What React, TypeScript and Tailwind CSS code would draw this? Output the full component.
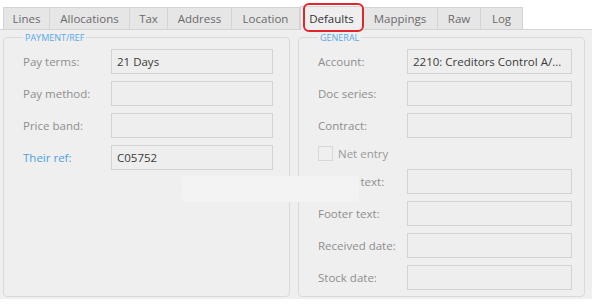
import React from 'react'

const tabs = [
  { name: 'Lines', w: 'w-[47px]' },
  { name: 'Allocations', w: 'w-[80px]' },
  { name: 'Tax', w: 'w-[38px]' },
  { name: 'Address', w: 'w-[64px]' },
  { name: 'Location', w: 'w-[68px]' },
  { name: 'Defaults', w: 'w-[63px]', active: true },
  { name: 'Mappings', w: 'w-[75px]' },
  { name: 'Raw', w: 'w-[43px]' },
  { name: 'Log', w: 'w-[42px]' },
]

const Field = ({ label, value, blue, wide }: { label: string; value?: string; blue?: boolean; wide?: boolean }) => (
  <div className="flex items-center h-[25px]">
    <span className={`${wide ? 'w-[89px]' : 'w-[88px]'} ${blue ? 'text-[#4d9fe3]' : 'text-[#8e8e8e]'}`}>{label}</span>
    <div className={`${wide ? 'w-[165px]' : 'w-[162px]'} h-[25px] border border-[#d3d3d3] bg-[#eeeeee] px-[5px] flex items-center text-[#3a3a3a] whitespace-nowrap overflow-hidden`}>
      {value}
    </div>
  </div>
)

export default function App() {
  return (
    <div className="relative w-[592px] h-[306px] bg-white pt-[5px] text-[11.5px] font-['Open_Sans',sans-serif]">
      {/* tab strip */}
      <div className="flex items-end h-[24px] pl-[3px]">
        {tabs.map((t) =>
          t.active ? (
            <div key={t.name} className={`${t.w} h-[24px] bg-[#efefef] border-x border-t border-[#d4d4d4] flex items-center justify-center text-[#333] relative z-10 -mb-px`}>
              {t.name}
            </div>
          ) : (
            <div key={t.name} className={`${t.w} h-[22px] bg-[#e6e6e6] border-t border-r border-[#d4d4d4] first:border-l flex items-center justify-center text-[#6a6a6a]`}>
              {t.name}
            </div>
          )
        )}
      </div>

      {/* panel */}
      <div className="h-[270px] bg-[#efefef] border-t border-[#d4d4d4] flex gap-[8px] px-[3px] pt-[1px]">
        <fieldset className="w-[287px] h-[266px] border border-[#dadada] rounded-[4px] pl-[19px] pt-[5px]">
          <legend className="px-[2px] text-[9px] leading-[13px] text-[#58a8ea] uppercase">Payment/Ref</legend>
          <div className="flex flex-col gap-[7px]">
            <Field label="Pay terms:" value="21 Days" />
            <Field label="Pay method:" />
            <Field label="Price band:" />
            <Field label="Their ref:" value="C05752" blue />
          </div>
        </fieldset>

        <fieldset className="w-[287px] h-[266px] border border-[#dadada] rounded-[4px] pl-[19px] pt-[5px]">
          <legend className="px-[2px] text-[9px] leading-[13px] text-[#58a8ea] uppercase">General</legend>
          <div className="flex flex-col gap-[7px]">
            <Field label="Account:" value="2210: Creditors Control A/..." wide />
            <Field label="Doc series:" wide />
            <Field label="Contract:" wide />
            <label className="flex items-center h-[17px] gap-[5px] text-[#9a9a9a]">
              <span className="w-[15px] h-[15px] border border-[#d8d8d8] bg-[#efefef]" />
              Net entry
            </label>
            <Field label="Header text:" wide />
            <Field label="Footer text:" wide />
            <Field label="Received date:" wide />
            <Field label="Stock date:" wide />
          </div>
        </fieldset>
      </div>

      {/* highlight around active tab */}
      <div className="absolute z-20 left-[303px] top-[3px] w-[61px] h-[29px] border-2 border-[#e2262c] rounded-[6px]" />
      {/* blank patch over the form */}
      <div className="absolute z-20 left-[182px] top-[176px] w-[177px] h-[26px] bg-[#f3f3f3] rounded-[3px]" />
    </div>
  )
}
